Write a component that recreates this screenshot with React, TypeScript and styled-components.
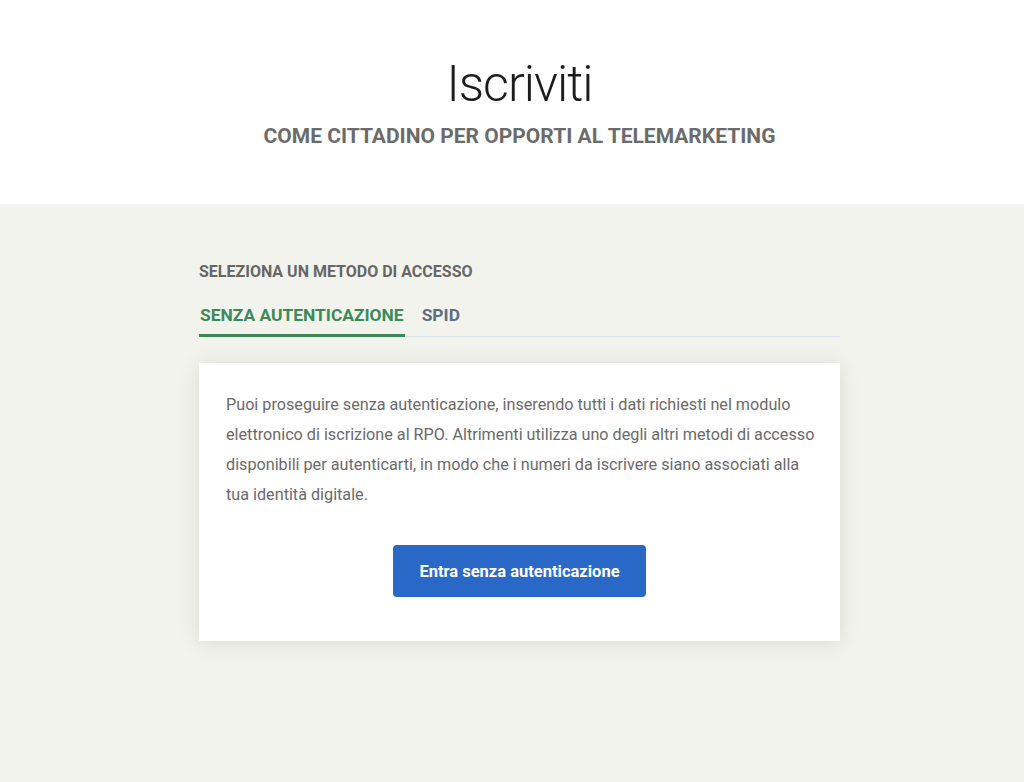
import React from "react";
import styled, { createGlobalStyle } from "styled-components";

const FONT = `"Roboto", "Liberation Sans", sans-serif`;

const Global = createGlobalStyle`
  html, body { margin: 0; padding: 0; }
  body { background: #f3f3ee; font-family: ${FONT}; }
`;

const Page = styled.div`
  min-height: 782px;
  background: #f3f3ee;
`;

const Header = styled.header`
  background: #ffffff;
  height: 204px;
  padding-left: 15px;
  box-sizing: border-box;
  display: flex;
  flex-direction: column;
  align-items: center;
  padding-top: 54px;
`;

const Title = styled.h1`
  margin: 0;
  font-size: 50px;
  font-weight: 300;
  letter-spacing: -1px;
  line-height: 60px;
  color: #1c1c1e;
`;

const Subtitle = styled.h2`
  margin: 8px 0 0;
  font-size: 21px;
  font-weight: 700;
  line-height: 28px;
  color: #6b6b6b;
`;

const Main = styled.main`
  padding: 56px 0 0 15px;
  display: flex;
  justify-content: center;
`;

const Container = styled.div`
  width: 641px;
`;

const SectionLabel = styled.h3`
  margin: 0;
  font-size: 16px;
  font-weight: 700;
  line-height: 24px;
  color: #666666;
`;

const Tabs = styled.div`
  margin-top: 19px;
  display: flex;
  border-bottom: 1px solid #dde3ee;
`;

const Tab = styled.div<{ $active?: boolean }>`
  font-size: 17.4px;
  font-weight: 700;
  line-height: 24px;
  padding: 0 1px 7px 1px;
  margin-right: 16px;
  margin-bottom: -1px;
  color: ${(p) => (p.$active ? "#3a8a57" : "#5c6f82")};
  border-bottom: 3px solid ${(p) => (p.$active ? "#3a8a57" : "transparent")};
`;

const Card = styled.section`
  margin-top: 26px;
  background: #ffffff;
  padding: 27px 27px 44px;
  box-shadow: 0 2px 20px rgba(0, 0, 0, 0.1);
  display: flex;
  flex-direction: column;
  align-items: center;
`;

const Text = styled.p`
  margin: 0;
  align-self: stretch;
  font-size: 16.2px;
  line-height: 30px;
  color: #6a6a6a;
  white-space: nowrap;
`;

const Button = styled.button`
  margin-top: 35px;
  width: 253px;
  height: 52px;
  border: none;
  border-radius: 4px;
  background: #2a68c8;
  color: #ffffff;
  font-family: ${FONT};
  font-size: 16.5px;
  font-weight: 700;
  cursor: pointer;
`;

export default function App() {
  return (
    <Page>
      <Global />
      <Header>
        <Title>Iscriviti</Title>
        <Subtitle>COME CITTADINO PER OPPORTI AL TELEMARKETING</Subtitle>
      </Header>
      <Main>
        <Container>
          <SectionLabel>SELEZIONA UN METODO DI ACCESSO</SectionLabel>
          <Tabs>
            <Tab $active>SENZA AUTENTICAZIONE</Tab>
            <Tab>SPID</Tab>
          </Tabs>
          <Card>
            <Text>
              Puoi proseguire senza autenticazione, inserendo tutti i dati richiesti nel modulo
              <br />
              elettronico di iscrizione al RPO. Altrimenti utilizza uno degli altri metodi di accesso
              <br />
              disponibili per autenticarti, in modo che i numeri da iscrivere siano associati alla
              <br />
              tua identità digitale.
            </Text>
            <Button>Entra senza autenticazione</Button>
          </Card>
        </Container>
      </Main>
    </Page>
  );
}
